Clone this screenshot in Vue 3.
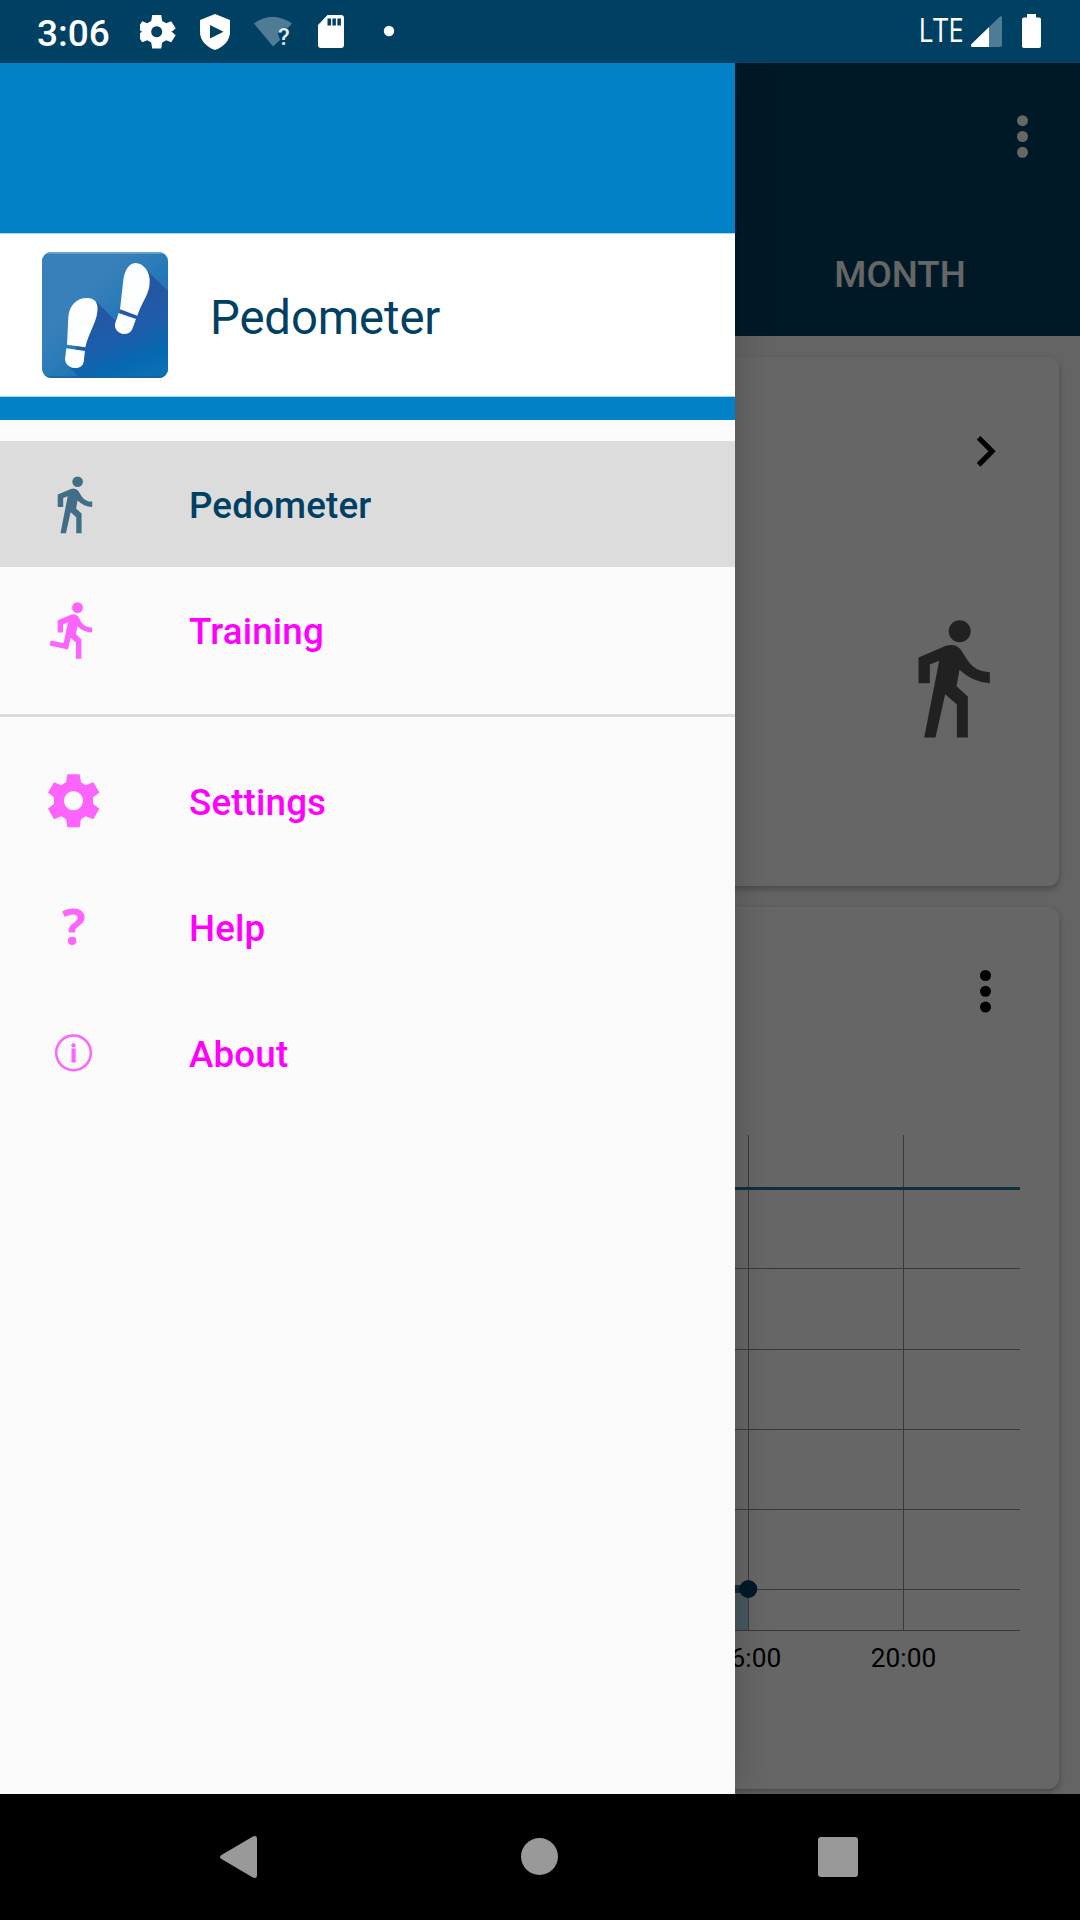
<script setup>
const mainItems = [
  { icon: 'walk', label: 'Pedometer', active: true },
  { icon: 'run', label: 'Training' },
]
const moreItems = [
  { icon: 'gear', label: 'Settings' },
  { icon: 'help', label: 'Help' },
  { icon: 'info', label: 'About' },
]
const rows = [133, 214, 294, 374, 454, 495]
</script>

<template>
  <div class="phone">
    <header class="status">
      <span class="clock">3:06</span>
      <svg class="status-left" width="270" height="63" viewBox="0 0 270 63">
        <g fill="#fff">
          <path fill-rule="evenodd" d="M13 15h9l1 6 4 2.300 5-2 4.500 7-4.500 4v-1l4.500 4-4.500 7-5-2-4 2.300-1 6h-9l-1-6-4-2.300-5 2-4.500-7 4.500-4v1l-4.500-4 4.500-7 5 2 4-2.300zM17.500 26.200a5.500 5.500 0 1 0 .01 0z" transform="translate(-.8 0)" />
          <path fill-rule="evenodd" d="M75 14l15 6v12c0 8-6 15-15 18-9-3-15-10-15-18V20zM70 25v13.500l13.500-6.800z" />
          <path d="M187.500 15H201q3 0 3 3v27q0 3-3 3h-20q-3 0-3-3V25z" />
          <path d="M187.500 18.500h3.500v7h-3.500zm4.900 0h3.500v7h-3.500zm5 0h3.500v7h-3.500z" fill="#004063" />
          <circle cx="249" cy="31" r="5.200" />
        </g>
        <path d="M114 23.500Q132 10 152 23.500L148 28Q139 26 138 34l2 6-7 6.500z" fill="#4f7c94" />
        <text x="138" y="45" class="wifi-q">?</text>
      </svg>
      <span class="spacer"></span>
      <svg class="status-right" width="160" height="63" viewBox="920 0 160 63">
        <text x="918.500" y="42" class="lte" textLength="45" lengthAdjust="spacingAndGlyphs">LTE</text>
        <path d="M989 27L1000 16.500q2-1 2 1V45q0 2-2 2h-11z" fill="#4f7c94" />
        <path d="M989 27V47H972q-2-1-.5-3z" fill="#fff" />
        <path d="M1027 14h9v3.500h3q2 0 2 2V46q0 2-2 2h-15q-2 0-2-2V19.500q0-2 2-2h3z" fill="#fff" />
      </svg>
    </header>

    <div class="stage">
      <div class="page">
        <div class="appbar">
          <div class="toolbar">
            <svg width="12" height="44" viewBox="0 0 12 44" fill="#fff"><circle cx="5.500" cy="5.700" r="5.500" /><circle cx="5.500" cy="21.500" r="5.500" /><circle cx="5.500" cy="37.300" r="5.500" /></svg>
          </div>
          <div class="tabs"><span class="tab">MONTH</span></div>
        </div>
        <div class="cards">
          <section class="card summary">
            <svg class="chevron" width="20" height="32" viewBox="0 0 20 32"><path d="M2.600 2.700L16 16.300L2.600 29.900" fill="none" stroke="#000" stroke-width="5.200" /></svg>
            <svg class="walker" width="130.300" height="130.300" viewBox="18.400 98.400 391 391"><use href="#walk" /></svg>
          </section>
          <section class="card graph">
            <svg class="more" width="12" height="44" viewBox="0 0 12 44"><circle cx="5.500" cy="6.500" r="5.500" /><circle cx="5.500" cy="22.300" r="5.500" /><circle cx="5.500" cy="38.100" r="5.500" /></svg>
            <svg class="chart" width="1038" height="560" viewBox="0 0 1038 560">
              <g fill="#8e8e8e">
                <rect v-for="y in rows" :key="y" x="60" :y="y" width="939" height="1" />
                <rect x="727" y="0" width="1" height="495" />
                <rect x="882" y="0" width="1" height="495" />
              </g>
              <path d="M600 454H727V495H600z" fill="#0288d1" fill-opacity=".3" />
              <path d="M60 53.500H999" class="goal" />
              <path d="M600 454H727" stroke="#004063" stroke-opacity=".75" stroke-width="8" />
              <circle cx="727.300" cy="454" r="9" fill="#004063" />
              <text x="727.500" y="531.500" class="tick">16:00</text>
              <text x="882.500" y="531.500" class="tick">20:00</text>
            </svg>
          </section>
        </div>
      </div>
      <div class="scrim"></div>

      <aside class="drawer">
        <div class="banner">
          <div class="brand">
            <svg class="logo" width="126" height="126" viewBox="126 96 378 378">
              <defs>
                <linearGradient id="tile" x1="0" y1="0" x2="1" y2="1"><stop offset=".35" stop-color="#3780ba" /><stop offset=".7" stop-color="#1874b5" /><stop offset="1" stop-color="#0b6db0" /></linearGradient>
                <linearGradient id="shade" x1=".35" y1="0" x2=".7" y2="1"><stop offset=".3" stop-color="#2456a3" /><stop offset=".6" stop-color="#1d5dab" /><stop offset=".85" stop-color="#0769b0" /><stop offset="1" stop-color="#0b70b4" /></linearGradient>
                <clipPath id="round"><rect x="126" y="96" width="378" height="378" rx="27" /></clipPath>
              </defs>
              <g clip-path="url(#round)">
                <path d="M126 96h378v378H126z" fill="url(#tile)" />
                <path d="M438 148L504 213V474H239L204 438L290 245L345 301L362 270z" fill="url(#shade)" />
                <path d="M126 96h378v5H126z" fill="#69a7d6" />
                <path d="M126 468h378v6H126z" fill="#1d5da5" opacity=".7" />
              </g>
              <g fill="#fdfeff">
                <path d="M201 374L205 290C208 257 229 234 261 234C286 234 296 251 292 276C288 310 266 338 256 382z" />
                <path d="M199 385L255 393L251 425C247 453 196 450 195 417z" />
                <path d="M360 268L369 188C372 154 386 129 406 129C431 129 451 156 449 186C449 222 428 240 412 287z" />
                <path d="M356 279L408 297L397 327C385 356 337 340 346 308z" />
              </g>
            </svg>
            <span class="brand-name">Pedometer</span>
          </div>
        </div>
        <nav class="menu">
          <template v-for="(group, g) in [mainItems, moreItems]" :key="g">
            <div v-if="g" class="divider"></div>
            <div v-for="item in group" :key="item.label" class="item" :class="{ active: item.active }">
              <svg v-if="item.icon === 'walk'" class="icon" viewBox="18.400 98.400 391 391">
                <g id="walk">
                  <circle cx="239.500" cy="153" r="33" />
                  <path d="M116 232L198 197Q228 188 244 210L264 242Q288 277 330 276V309Q278 307 239 269L230 318L264 349V472H231V373L196 342L167 472H133L178 242L150 253V309H116z" />
                </g>
              </svg>
              <svg v-else-if="item.icon === 'run'" class="icon" viewBox="126 505.500 189 189">
                <circle cx="232.500" cy="531.500" r="16.200" />
                <path d="M173 569L213 553Q227 548 235 559L244 575Q256 591 276 591V606Q251 605 232 587L228 611L244 626V685H228V637L212 622L204 657L149 645L152 630L191 638L204 575L189 582V606H173z" />
              </svg>
              <svg v-else-if="item.icon === 'gear'" class="icon" viewBox="126 88.500 189 189">
                <path fill-rule="evenodd" d="M202 102H239L243 126L257 135L280 126L298 157L279 172V191L298 206L280 237L257 228L243 237L239 261H202L198 237L184 228L162 237L144 206L162 191V172L144 157L162 126L184 135L198 126zM220.500 153a28.500 28.500 0 1 0 .01 0z" transform="translate(0 -1)" />
              </svg>
              <svg v-else-if="item.icon === 'help'" class="icon" viewBox="126 466.500 189 189">
                <text x="221.500" y="612" class="question">?</text>
              </svg>
              <svg v-else class="icon" viewBox="126 844.500 189 189">
                <circle cx="220.500" cy="937" r="52" fill="none" stroke="currentColor" stroke-width="7.500" />
                <circle cx="220.500" cy="914.500" r="6.500" />
                <rect x="214.500" y="924" width="12.500" height="42" />
              </svg>
              <span class="label">{{ item.label }}</span>
            </div>
          </template>
        </nav>
      </aside>
    </div>

    <footer class="navbar">
      <svg width="1080" height="126" viewBox="0 1794 1080 126" fill="#999">
        <path d="M221.500 1855L252 1837Q257 1834.500 257 1839V1875Q257 1879.500 252 1877L221.500 1859Q218.500 1857 221.500 1855z" />
        <circle cx="539.500" cy="1856.500" r="18.500" />
        <rect x="818" y="1837" width="40" height="40" rx="3" />
      </svg>
    </footer>
  </div>
</template>

<style>
body { margin: 0; background: #000; }
</style>
<style scoped>
.phone { width: 1080px; height: 1920px; display: flex; flex-direction: column; overflow: hidden; font-family: Roboto, sans-serif; }
svg { display: block; flex: none; }
.status { height: 63px; flex: none; display: flex; align-items: center; background: #004063; color: #fff; }
.clock { width: 74px; margin-left: 37px; font-size: 37px; line-height: 61px; font-weight: 500; padding-top: 4px; }
.status-left { margin-left: 29px; }
.spacer { flex: 1; }
.wifi-q { font: 500 24px Roboto, sans-serif; fill: #e4edf1; }
.lte { font: 400 32px "Open Sans", sans-serif; fill: #fff; }
.stage { position: relative; height: 1731px; flex: none; overflow: hidden; }
.page { height: 1731px; background: #fafafa; }
.appbar { height: 273px; background: #004063; display: flex; flex-direction: column; }
.toolbar { height: 147px; display: flex; justify-content: flex-end; align-items: center; padding-right: 51px; }
.tabs { height: 126px; display: flex; justify-content: flex-end; }
.tab { width: 360px; line-height: 130px; text-align: center; color: #fff; font-size: 36.750px; font-weight: 500; }
.cards { display: flex; flex-direction: column; gap: 21px; padding: 21px; }
.card { background: #fff; border-radius: 11px; box-shadow: 0 3px 7px rgba(0, 0, 0, .28); display: flex; flex-direction: column; align-items: flex-end; }
.summary { height: 529px; }
.chevron { margin: 78px 63px 0 0; }
.walker { margin: 146px 42.600px 0 0; opacity: .667; }
.graph { height: 882px; }
.more { margin: 62px 67px 0 0; }
.chart { margin-top: 122px; }
.goal { stroke: #24789f; stroke-width: 3; }
.tick { font-size: 26.250px; text-anchor: middle; }
.scrim { position: absolute; inset: 0; background: rgba(0, 0, 0, .6); }
.drawer { position: absolute; left: 0; top: 0; width: 735px; height: 1731px; background: #fafafa; box-shadow: 0 0 36px rgba(0, 0, 0, .2); }
.banner { background: #0281c8; height: 357px; display: flex; flex-direction: column; justify-content: flex-end; }
.brand { height: 162px; margin-bottom: 23px; display: flex; align-items: center; padding-left: 42px; background: #fff; border-top: 1px solid #aad6ee; border-bottom: 1px solid #aad6ee; }
.logo { margin-top: -1px; }
.brand-name { margin-left: 42px; padding-top: 5px; color: #004063; font-size: 47.250px; line-height: 56px; letter-spacing: -.1px; }
.menu { padding: 21px 0; }
.item { height: 126px; display: flex; align-items: center; padding-left: 42px; color: #f0f; font-size: 36.750px; font-weight: 500; }
.item.active { background: #dcdcdc; color: #004063; }
.label { padding-top: 2px; letter-spacing: .15px; }
.icon { width: 63px; height: 63px; margin-right: 84px; fill: currentColor; opacity: .6; overflow: visible; }
.item.active .icon { opacity: .7; }
.question { font: 700 149px "Open Sans", sans-serif; text-anchor: middle; }
.divider { height: 3px; margin: 21px 0; background: #dcdcdc; }
.navbar { height: 126px; background: #000; }
</style>
